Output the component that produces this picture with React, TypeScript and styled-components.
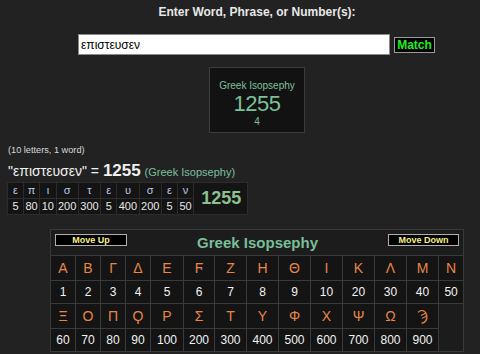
import React, {FC, useState} from 'react';
import styled, {createGlobalStyle} from 'styled-components';

const Global = createGlobalStyle`
  html, body {
    margin: 0;
    padding: 0;
    background: #222222;
    font-family: "Liberation Sans", "DejaVu Sans", Arial, sans-serif;
  }
`;

const Page = styled.div`
  width: 480px;
  height: 354px;
  overflow: hidden;
  display: flex;
  flex-direction: column;
  align-items: flex-start;
`;

const Prompt = styled.div`
  align-self: stretch;
  padding: 5px 0 0 34px;
  text-align: center;
  color: #e8e8e8;
  font-weight: bold;
  font-size: 12px;
  line-height: 14px;
`;

const Form = styled.div`
  margin-top: 15px;
  margin-left: 78px;
  display: flex;
  align-items: center;
  gap: 4px;
`;

const WordInput = styled.input`
  box-sizing: border-box;
  width: 312px;
  height: 21px;
  border: 1px solid #8a8a8a;
  background: #ffffff;
  padding: 0 2px;
  font-family: "Liberation Sans", "DejaVu Sans", sans-serif;
  font-size: 12px;
  color: #000;
  outline: none;
`;

const MatchButton = styled.button`
  box-sizing: border-box;
  width: 41px;
  height: 16px;
  padding: 0;
  background: #000;
  border: 1px solid #9a9a9a;
  color: #22ee22;
  font-family: "Liberation Sans", sans-serif;
  font-weight: bold;
  font-size: 12px;
  line-height: 14px;
`;

const Summary = styled.div`
  box-sizing: border-box;
  margin: 12px 0 0 209px;
  width: 96px;
  height: 66px;
  background: #121212;
  border: 1px solid #3c3c3c;
  display: flex;
  flex-direction: column;
  align-items: center;
  padding-top: 12px;
  color: #7cc09a;
`;

const SummaryLabel = styled.div`
  font-size: 10px;
  line-height: 12px;
  white-space: nowrap;
`;

const SummaryValue = styled.div`
  font-size: 22px;
  line-height: 24px;
  letter-spacing: -0.5px;
`;

const SummaryWords = styled.div`
  font-size: 10px;
  line-height: 11px;
`;

const Counts = styled.div`
  margin: 11px 0 0 8px;
  color: #d8d8d8;
  font-size: 9.2px;
  line-height: 12px;
`;

const Equation = styled.div`
  margin: 6px 0 0 8px;
  color: #f0f0f0;
  font-size: 14px;
  line-height: 17px;
  white-space: nowrap;
`;

const Total = styled.b`
  font-size: 17px;
`;

const CipherName = styled.span`
  color: #7cc09a;
  font-size: 11px;
`;

const Breakdown = styled.table`
  margin: 1px 0 0 7px;
  border-collapse: collapse;
  background: #141414;
  font-size: 11px;
`;

const BCell = styled.td<{$letter?: boolean}>`
  border: 1px solid #2c2c2c;
  padding: 0 1.5px;
  width: 12px;
  height: 15px;
  line-height: 15px;
  text-align: center;
  white-space: nowrap;
  color: ${p => (p.$letter ? '#b8c8ec' : '#e8e8e8')};
`;

const BTotal = styled.td`
  border: 1px solid #2c2c2c;
  padding: 0 6px 0 7px;
  color: #8cc08e;
  font-weight: bold;
  font-size: 18px;
`;

const Chart = styled.table`
  margin: 14px 0 0 50px;
  width: 413px;
  table-layout: fixed;
  border-collapse: collapse;
  background: #1c1c1c;
  border: 1px solid #3a3a3a;
`;

const Col = styled.col<{$w: number}>`
  width: ${p => p.$w}px;
`;

const HeadCell = styled.td`
  height: 25px;
  padding: 0 4px;
  border: 1px solid #3a3a3a;
`;

const HeadBar = styled.div`
  display: flex;
  align-items: center;
  justify-content: space-between;
`;

const NavButton = styled.button<{$w: number}>`
  box-sizing: border-box;
  width: ${p => p.$w}px;
  height: 12px;
  padding: 0;
  margin-top: -5px;
  background: #000;
  border: 1px solid #b0b0b0;
  color: #f4f08a;
  font-family: "Liberation Sans", sans-serif;
  font-weight: bold;
  font-size: 9px;
  line-height: 10px;
`;

const ChartTitle = styled.div`
  color: #79be98;
  font-weight: bold;
  font-size: 15px;
`;

const Cell = styled.td<{$letter?: boolean}>`
  border: 1px solid #3a3a3a;
  background: #141414;
  text-align: center;
  padding: 0;
  height: ${p => (p.$letter ? 24 : 22)}px;
  color: ${p => (p.$letter ? '#e8864a' : '#f2f2f2')};
  font-size: ${p => (p.$letter ? 14 : 12)}px;
  font-family: "Liberation Sans", "DejaVu Sans", sans-serif;
`;

const word = 'επιστευσεν';
const values: Record<string, number> = {
  'ε': 5, 'π': 80, 'ι': 10, 'σ': 200, 'τ': 300, 'υ': 400, 'ν': 50,
};

const widths = [25, 25, 25, 25, 33, 31, 32, 32, 32, 32, 32, 32, 32, 25];

const rows: [string[], number[]][] = [
  [
    ['Α', 'Β', 'Γ', 'Δ', 'Ε', 'Ϝ', 'Ζ', 'Η', 'Θ', 'Ι', 'Κ', 'Λ', 'Μ', 'Ν'],
    [1, 2, 3, 4, 5, 6, 7, 8, 9, 10, 20, 30, 40, 50],
  ],
  [
    ['Ξ', 'Ο', 'Π', 'Ϙ', 'Ρ', 'Σ', 'Τ', 'Υ', 'Φ', 'Χ', 'Ψ', 'Ω', 'Ϡ'],
    [60, 70, 80, 90, 100, 200, 300, 400, 500, 600, 700, 800, 900],
  ],
];

const App: FC = () => {
  const [term, setTerm] = useState(word);
  const letters = word.split('');
  const total = letters.reduce((sum, l) => sum + values[l], 0);

  return (
    <Page>
      <Global/>
      <Prompt>Enter Word, Phrase, or Number(s):</Prompt>

      <Form>
        <WordInput value={term} onChange={e => setTerm(e.target.value)}/>
        <MatchButton>Match</MatchButton>
      </Form>

      <Summary>
        <SummaryLabel>Greek Isopsephy</SummaryLabel>
        <SummaryValue>{total}</SummaryValue>
        <SummaryWords>4</SummaryWords>
      </Summary>

      <Counts>(10 letters, 1 word)</Counts>
      <Equation>
        "{word}" = <Total>{total}</Total> <CipherName>(Greek Isopsephy)</CipherName>
      </Equation>

      <Breakdown>
        <tbody>
          <tr>
            {letters.map((l, i) => <BCell key={i} $letter>{l}</BCell>)}
            <BTotal rowSpan={2}>{total}</BTotal>
          </tr>
          <tr>
            {letters.map((l, i) => <BCell key={i}>{values[l]}</BCell>)}
          </tr>
        </tbody>
      </Breakdown>

      <Chart>
        <colgroup>
          {widths.map((w, i) => <Col key={i} $w={w}/>)}
        </colgroup>
        <tbody>
          <tr>
            <HeadCell colSpan={14}>
              <HeadBar>
                <NavButton $w={72}>Move Up</NavButton>
                <ChartTitle>Greek Isopsephy</ChartTitle>
                <NavButton $w={71}>Move Down</NavButton>
              </HeadBar>
            </HeadCell>
          </tr>
          {rows.map(([chars, nums], r) => (
            <React.Fragment key={r}>
              <tr>
                {chars.map((c, i) => <Cell key={i} $letter>{c}</Cell>)}
              </tr>
              <tr>
                {nums.map((n, i) => <Cell key={i}>{n}</Cell>)}
              </tr>
            </React.Fragment>
          ))}
        </tbody>
      </Chart>
    </Page>
  );
};

export default App;
